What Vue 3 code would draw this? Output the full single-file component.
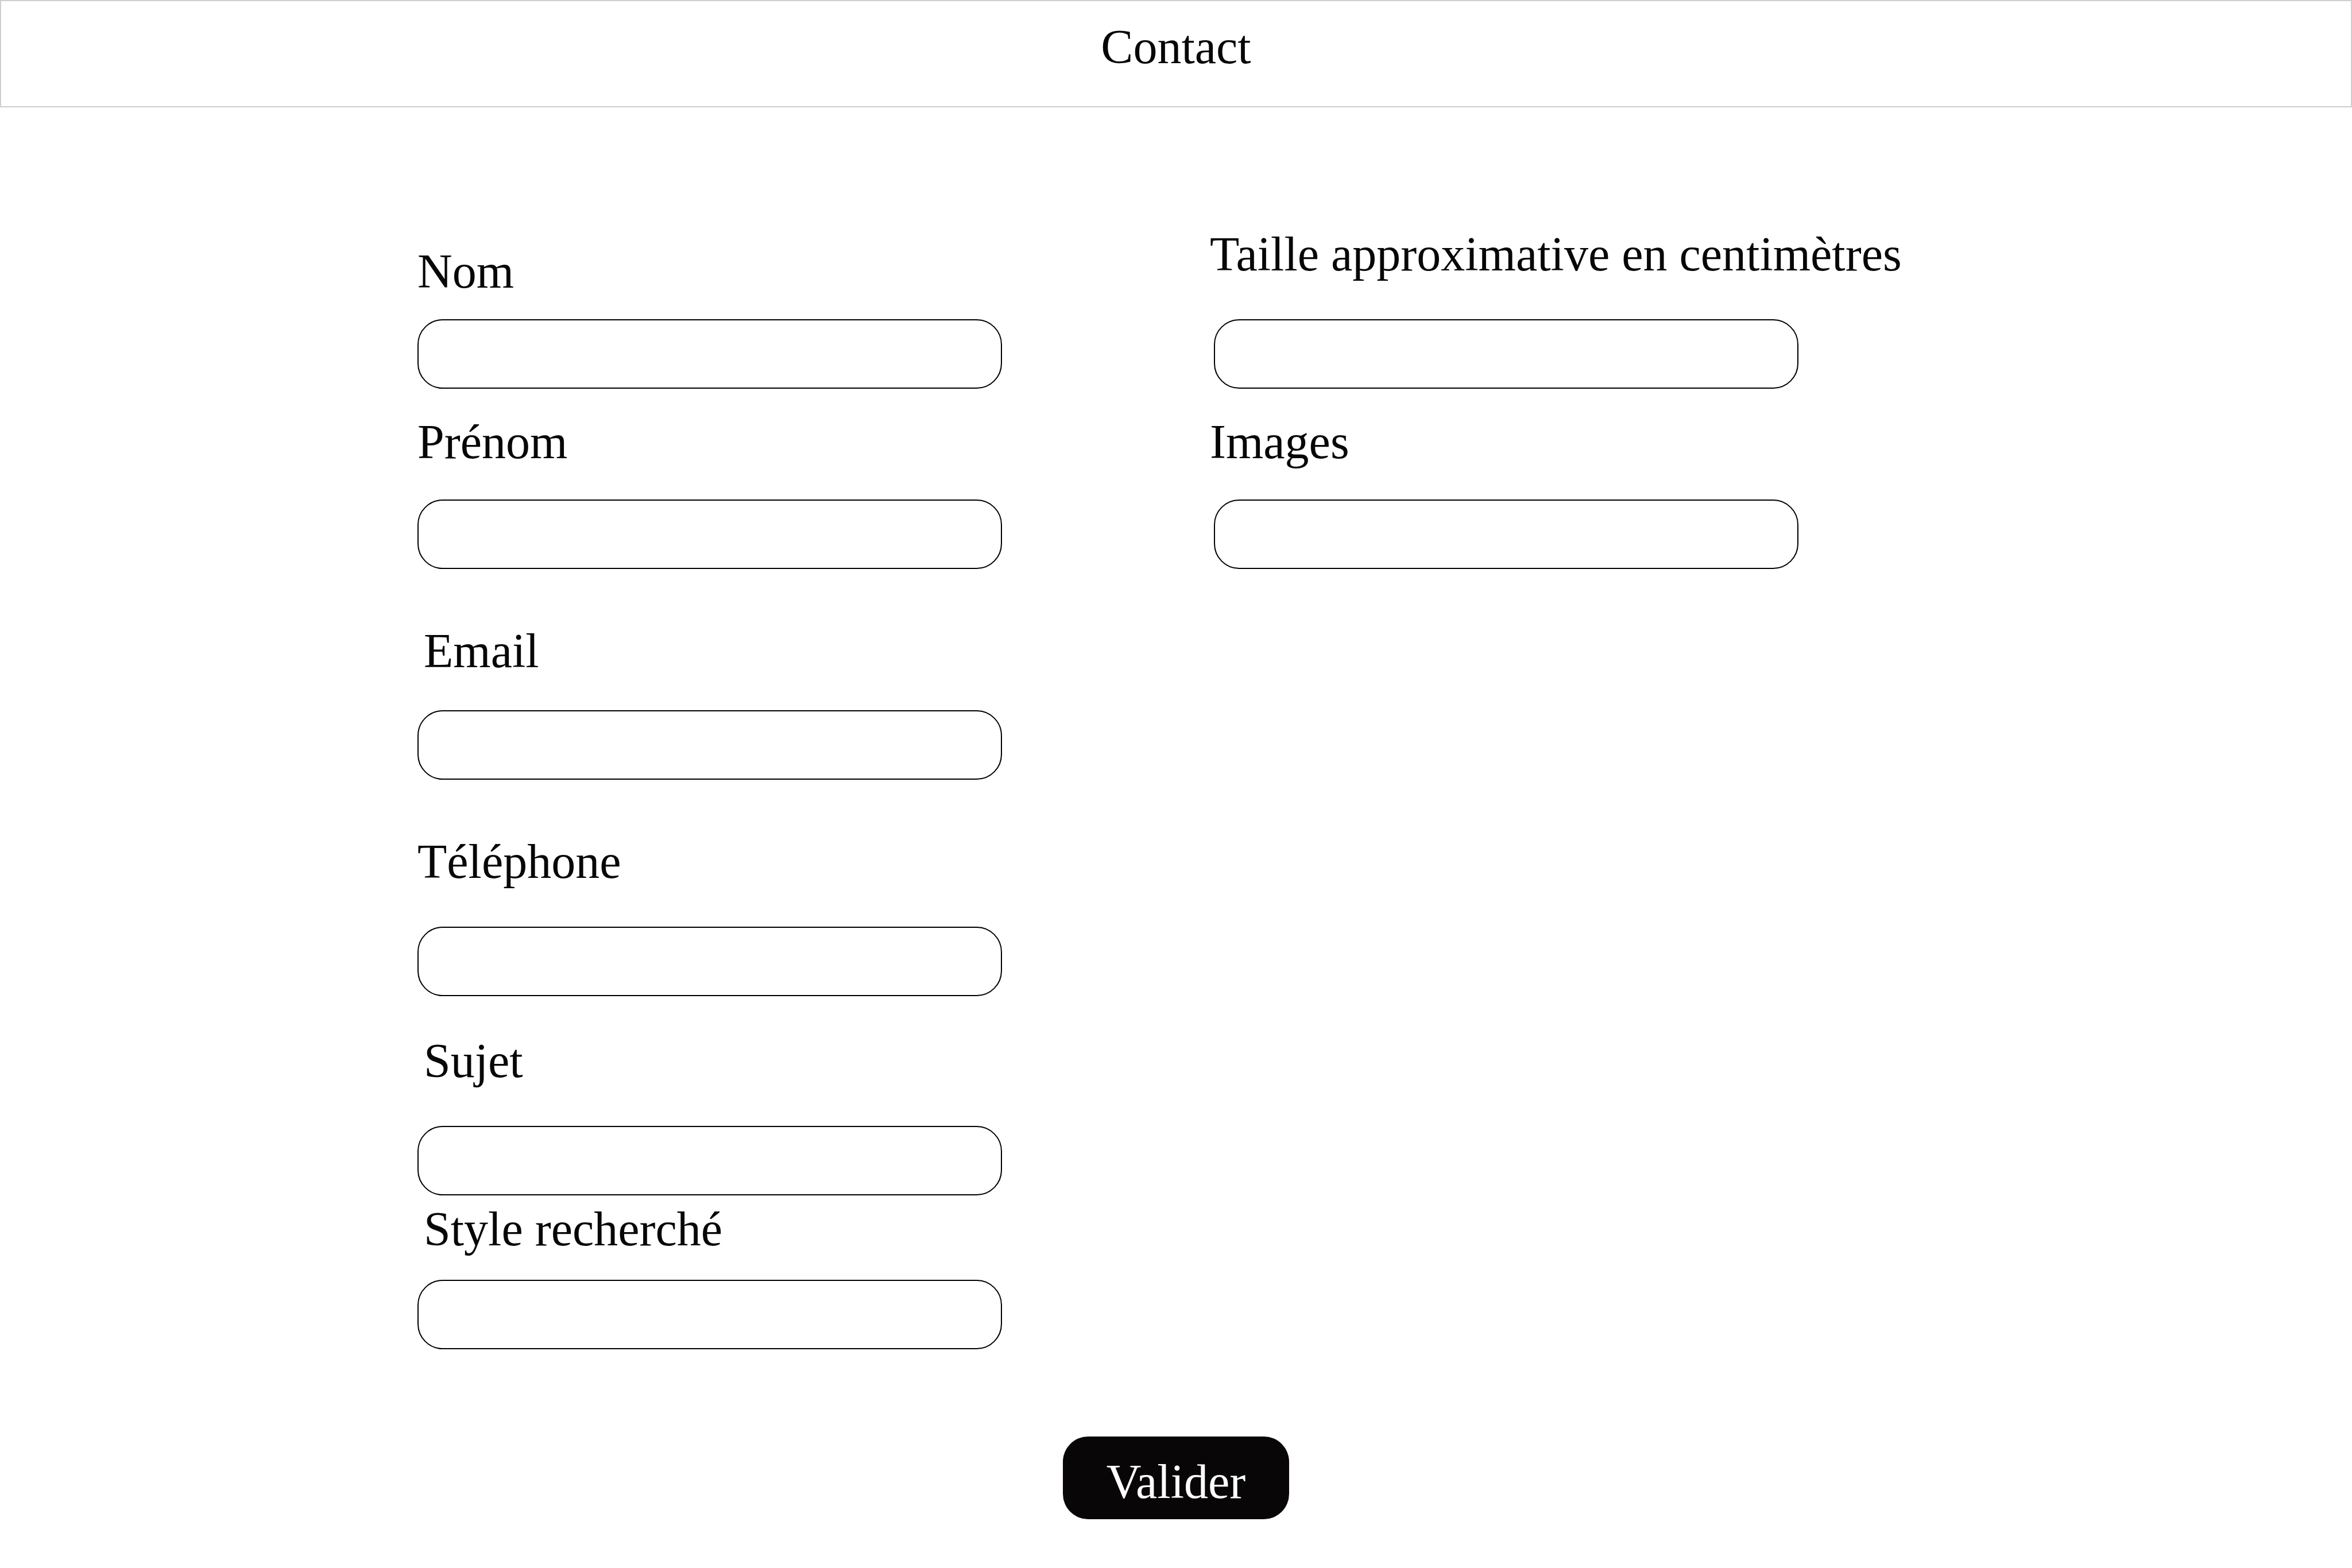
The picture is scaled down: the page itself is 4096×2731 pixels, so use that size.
<script setup>
const identity = [
  { id: 'nom', label: 'Nom', type: 'text', classes: 'gap-xs' },
  { id: 'prenom', label: 'Prénom', type: 'text', classes: 'before-m gap-m' },
  { id: 'email', label: 'Email', type: 'email', classes: 'before-xl gap-l indent' },
  { id: 'telephone', label: 'Téléphone', type: 'tel', classes: 'before-xl gap-xl' },
  { id: 'sujet', label: 'Sujet', type: 'text', classes: 'before-l gap-xl indent' },
  { id: 'style', label: 'Style recherché', type: 'text', classes: 'before-s gap-s indent' },
]

const project = [
  { id: 'taille', label: 'Taille approximative en centimètres', type: 'text', classes: 'gap-xl' },
  { id: 'images', label: 'Images', type: 'text', classes: 'before-m gap-m' },
]
</script>

<template>
  <div class="page">
    <header class="header">
      <h1 class="title">Contact</h1>
    </header>

    <form class="form" @submit.prevent>
      <div class="columns">
        <div class="column column-identity">
          <div v-for="field in identity" :key="field.id" class="field" :class="field.classes">
            <label class="label" :for="field.id">{{ field.label }}</label>
            <input class="input" :id="field.id" :name="field.id" :type="field.type" />
          </div>
        </div>

        <div class="column column-project">
          <div v-for="field in project" :key="field.id" class="field" :class="field.classes">
            <label class="label" :for="field.id">{{ field.label }}</label>
            <input class="input" :id="field.id" :name="field.id" :type="field.type" />
          </div>
        </div>
      </div>

      <button class="submit" type="submit">Valider</button>
    </form>
  </div>
</template>

<style>
body {
  background: #fff;
}
</style>

<style scoped>
.page {
  color: #080607;
  font-family: "Liberation Serif", "Times New Roman", serif;
  font-size: 84px;
  line-height: 96px;
}

.header {
  padding: 32px 0 55px;
  border: 2px solid #d0cecf;
  text-align: center;
}

.title {
  margin: 0;
  font: inherit;
}

.form {
  display: flex;
  flex-direction: column;
  align-items: center;
  padding: 208px 0 80px;
}

.columns {
  display: grid;
  align-self: stretch;
  align-items: start;
  grid-template-columns:
    minmax(0, 727fr) minmax(0, 1018fr) minmax(0, 369fr)
    minmax(0, 1018fr) minmax(0, 964fr);
}

.column-identity {
  grid-column: 2;
  padding-top: 30px;
}

.column-project {
  grid-column: 4;
}

.column-project .label {
  margin-left: -7px;
}

.field {
  display: flex;
  flex-direction: column;
}

.label {
  white-space: nowrap;
}

.indent .label {
  margin-left: 11px;
}

.before-s { margin-top: 11px; }
.before-m { margin-top: 45px; }
.before-l { margin-top: 65px; }
.before-xl { margin-top: 95px; }

.gap-xs { gap: 35px; }
.gap-s { gap: 40px; }
.gap-m { gap: 52px; }
.gap-l { gap: 55px; }
.gap-xl { gap: 65px; }

.input {
  box-sizing: border-box;
  width: 100%;
  height: 121px;
  margin: 0;
  padding: 0 40px;
  border: 2px solid #000;
  border-radius: 44px;
  background: transparent;
  color: inherit;
  font: inherit;
}

.submit {
  margin: 152px 0 0;
  padding: 31px 76px 17px;
  border: 0;
  border-radius: 44px;
  background: #080607;
  color: #fff;
  font: inherit;
  cursor: pointer;
}
</style>
